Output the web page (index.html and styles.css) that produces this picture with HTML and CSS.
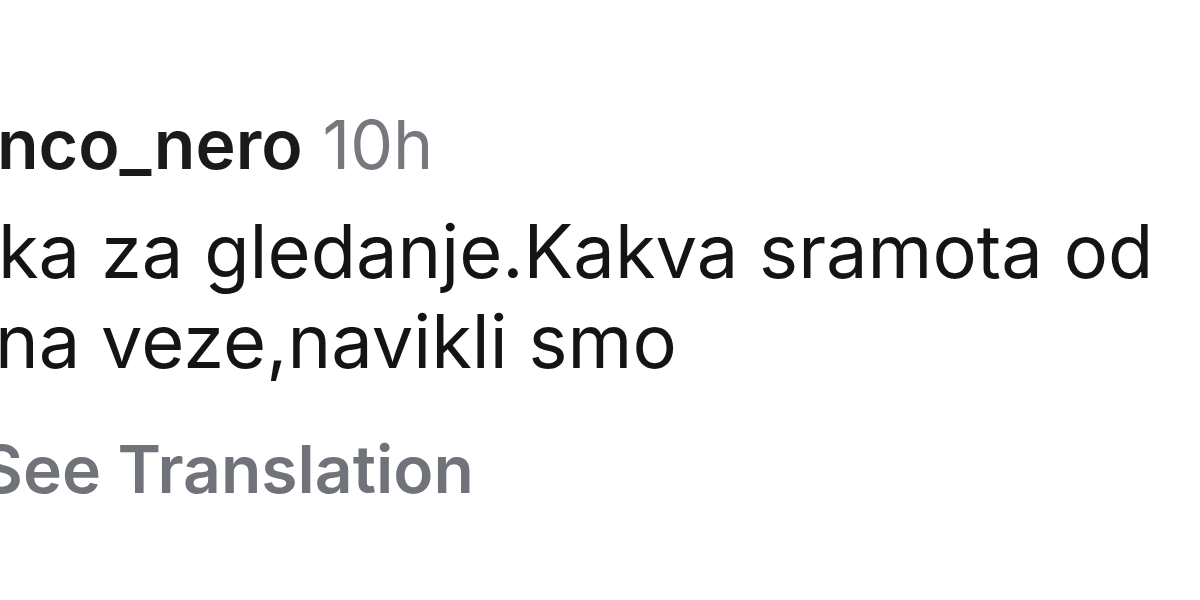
FILE: index.html
```html
<!DOCTYPE html>
<html lang="en">
  <head>
    <meta charset="UTF-8" />
    <meta name="viewport" content="width=device-width, initial-scale=1.0" />
    <title>Comment</title>
    <link rel="stylesheet" href="styles.css">
  </head>
  <body>
    <div class="comment">
      <div class="comment-head">
        <span class="user">nco_nero</span>
        <span class="time">10h</span>
      </div>
      <p class="comment-text">
        <span class="line first">ka za gledanje.Kakva sramota od</span>
        <span class="line second">na veze,navikli smo</span>
      </p>
      <div class="translate">See Translation</div>
    </div>
  </body>
</html>
```

FILE: styles.css
```css
html,
body {
  margin: 0;
  height: 100%;
  background: #fff;
  overflow: hidden;
}
body {
  font-family: Inter, "Liberation Sans", Arial, sans-serif;
  color: #141414;
}
.comment {
  padding-top: 104px;
}
.comment-head {
  display: flex;
  align-items: baseline;
  gap: 20px;
  margin-left: -3px;
  font-size: 68px;
  line-height: 80px;
}
.user {
  font-weight: 600;
  color: #1a1a1a;
}
.time {
  font-weight: 400;
  color: #77777e;
}
.comment-text {
  margin: 22px 0 0;
  font-size: 74px;
  line-height: 90px;
}
.line {
  display: block;
  white-space: nowrap;
}
.line.first {
  margin-left: -2px;
}
.line.second {
  margin-left: -5px;
}
.translate {
  margin-top: 43px;
  margin-left: -20px;
  font-size: 66px;
  line-height: 80px;
  font-weight: 600;
  color: #70737a;
}
```
